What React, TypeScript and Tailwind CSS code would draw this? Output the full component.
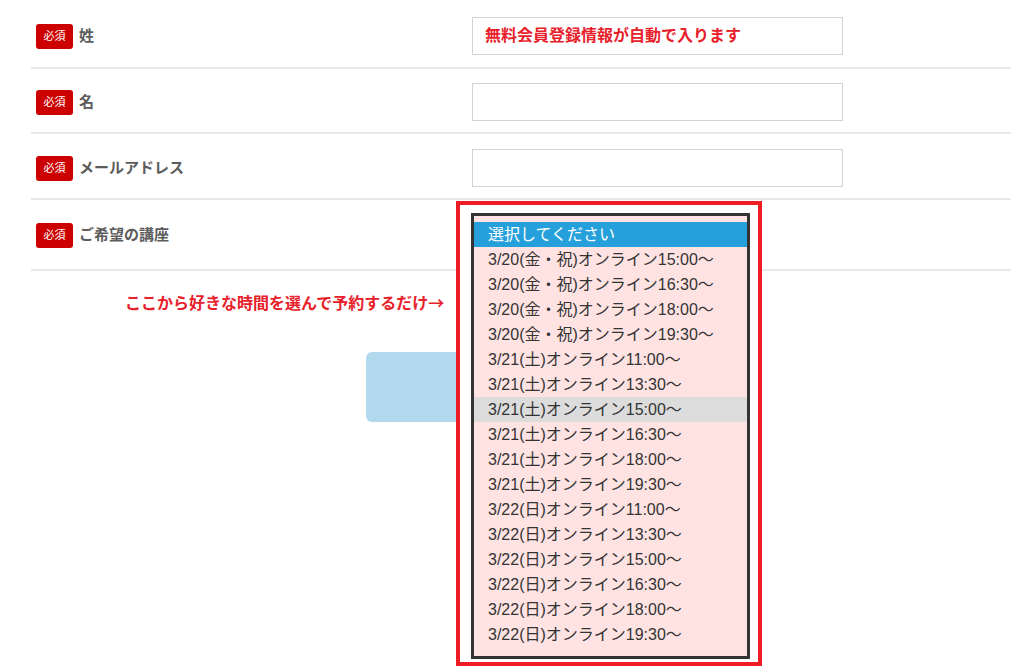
const options = [
  "3/20(金・祝)オンライン15:00～",
  "3/20(金・祝)オンライン16:30～",
  "3/20(金・祝)オンライン18:00～",
  "3/20(金・祝)オンライン19:30～",
  "3/21(土)オンライン11:00～",
  "3/21(土)オンライン13:30～",
  "3/21(土)オンライン15:00～",
  "3/21(土)オンライン16:30～",
  "3/21(土)オンライン18:00～",
  "3/21(土)オンライン19:30～",
  "3/22(日)オンライン11:00～",
  "3/22(日)オンライン13:30～",
  "3/22(日)オンライン15:00～",
  "3/22(日)オンライン16:30～",
  "3/22(日)オンライン18:00～",
  "3/22(日)オンライン19:30～",
];

const hovered = "3/21(土)オンライン15:00～";

function Label({ text }: { text: string }) {
  return (
    <div className="flex h-[38px] w-[441px] items-center pl-[5px]">
      <span className="flex h-[25px] w-[37px] items-center justify-center rounded-[3px] bg-[#cc0000] text-[11px] leading-none text-white">
        必須
      </span>
      <span className="ml-[6px] text-[15px] font-bold text-[#5c5c5c]">{text}</span>
    </div>
  );
}

function Field({ children }: { children?: React.ReactNode }) {
  return (
    <div className="flex h-[38px] w-[371px] items-center border-[1.5px] border-[#d4d4d4] bg-white px-3">
      {children}
    </div>
  );
}

export default function App() {
  return (
    <div
      className="h-[672px] w-[1024px] overflow-hidden bg-white"
      style={{ fontFamily: '"Liberation Sans", "Noto Sans CJK JP", sans-serif' }}
    >
      <div className="ml-[31px] w-[980px]">
        <div className="flex h-[69px] items-start border-b-2 border-[#e8e8e8] pt-[17px]">
          <Label text="姓" />
          <Field>
            <span className="text-[16px] font-bold text-[#e8202a]">無料会員登録情報が自動で入ります</span>
          </Field>
        </div>
        <div className="flex h-[65px] items-start border-b-2 border-[#e8e8e8] pt-[14px]">
          <Label text="名" />
          <Field />
        </div>
        <div className="flex h-[66px] items-start border-b-2 border-[#e8e8e8] pt-[15px]">
          <Label text="メールアドレス" />
          <Field />
        </div>
        <div className="relative flex h-[71px] items-start border-b-2 border-[#e8e8e8] pt-[16px]">
          <Label text="ご希望の講座" />
          <div className="absolute left-[425px] top-[1px] z-10 h-[465px] w-[306px] border-4 border-[#ee1c25] bg-white pb-[3px] pl-[11px] pr-[8px] pt-[8px]">
            <div className="h-full border-[3px] border-[#333] bg-[#ffe3e3] pb-[9px] pt-[6px]">
              <div className="flex h-[25px] items-center bg-[#26a0da] pl-[14px] text-[16px] text-white">
                選択してください
              </div>
              {options.map((o, i) => (
                <div
                  key={i}
                  className={
                    o === hovered
                      ? "flex h-[25px] items-center bg-[#dcdcdc] pl-[14px] text-[16px] text-[#333]"
                      : "flex h-[25px] items-center pl-[14px] text-[16px] text-[#333]"
                  }
                >
                  {o}
                </div>
              ))}
            </div>
          </div>
        </div>
        <p className="mt-[19px] pl-[94px] font-['Noto_Sans_CJK_JP',sans-serif] text-[16px] font-bold leading-6 text-[#e8202a]">
          ここから好きな時間を選んで予約するだけ→
        </p>
        <div className="ml-[335px] mt-[38px] h-[70px] w-[310px] rounded-md bg-[#b3d9ef]" />
      </div>
    </div>
  );
}
